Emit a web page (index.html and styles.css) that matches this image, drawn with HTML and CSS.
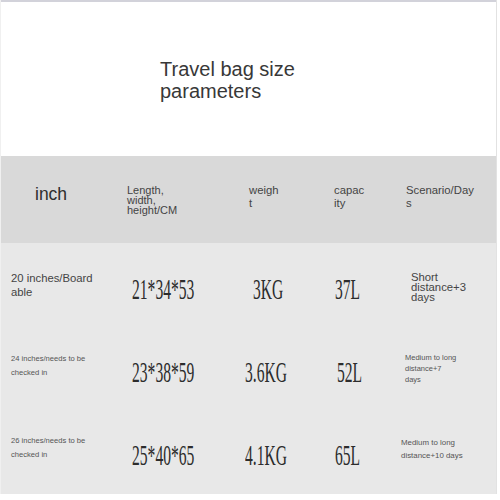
FILE: index.html
```html
<!DOCTYPE html>
<html>
<head>
<meta charset="utf-8">
<link rel="stylesheet" href="styles.css">
</head>
<body>
<div class="page">
  <div class="top">
    <h1 class="title">Travel bag size<br>parameters</h1>
  </div>
  <div class="head row">
    <div class="cell c1"><span class="inch">inch</span></div>
    <div class="cell c2"><span class="hsmall tight">Length,<br>width,<br>height/CM</span></div>
    <div class="cell c3"><span class="hsmall">weigh<br>t</span></div>
    <div class="cell c4"><span class="hsmall">capac<br>ity</span></div>
    <div class="cell c5"><span class="hsmall">Scenario/Day<br>s</span></div>
  </div>
  <div class="body">
    <div class="row r1">
      <div class="cell c1"><span class="lab big">20 inches/Board<br>able</span></div>
      <div class="cell c2"><span class="num">21*34*53</span></div>
      <div class="cell c3 p15"><span class="num">3KG</span></div>
      <div class="cell c4 p12"><span class="num">37L</span></div>
      <div class="cell c5 p16"><span class="scen big">Short<br>distance+3<br>days</span></div>
    </div>
    <div class="row r2">
      <div class="cell c1"><span class="lab small">24 inches/needs to be<br>checked in</span></div>
      <div class="cell c2"><span class="num">23*38*59</span></div>
      <div class="cell c3 p7"><span class="num">3.6KG</span></div>
      <div class="cell c4 p14"><span class="num">52L</span></div>
      <div class="cell c5 p10"><span class="scen mid">Medium to long<br>distance+7<br>days</span></div>
    </div>
    <div class="row r3">
      <div class="cell c1"><span class="lab small">26 inches/needs to be<br>checked in</span></div>
      <div class="cell c2"><span class="num">25*40*65</span></div>
      <div class="cell c3 p7"><span class="num">4.1KG</span></div>
      <div class="cell c4 p12"><span class="num">65L</span></div>
      <div class="cell c5 p6"><span class="scen low">Medium to long<br>distance+10 days</span></div>
    </div>
  </div>
</div>
</body>
</html>
```

FILE: styles.css
```css
html, body {
  margin: 0;
  padding: 0;
  background: #ffffff;
}
body {
  font-family: "Liberation Sans", Arial, sans-serif;
  color: #333333;
}
.page {
  width: 497px;
  border-right: 1px solid #e2e2e2;
  border-left: 1px solid #f0f0f0;
  box-sizing: border-box;
}
.top {
  height: 156px;
  box-sizing: border-box;
  border-top: 2px solid #d2d2da;
  padding: 56px 0 0 159px;
  background: #ffffff;
}
.title {
  margin: 0;
  font-weight: normal;
  font-size: 20px;
  line-height: 22px;
  color: #383838;
}
.row {
  display: grid;
  grid-template-columns: 119px 118px 85px 72px 102px;
  align-items: center;
}
.head {
  height: 87px;
  background: #d9d9d9;
}
.body {
  background: #e8e8e8;
  padding-top: 4px;
  height: 251px;
  box-sizing: border-box;
}
.body .row {
  height: 82px;
}
.cell {
  padding-left: 11px;
}
.head .c1 { padding-left: 34px; padding-bottom: 10px; }
.head .c2 { padding-left: 7px; }
.head .c3 { padding-left: 11px; padding-bottom: 6px; }
.head .c4 { padding-left: 11px; padding-bottom: 6px; }
.head .c5 { padding-left: 11px; padding-bottom: 6px; }
.inch {
  font-size: 17.5px;
  color: #2e2e2e;
}
.hsmall {
  display: block;
  font-size: 11.3px;
  line-height: 13px;
  color: #444444;
}
.hsmall.tight {
  font-size: 11px;
  line-height: 10px;
}
.body .c1 { padding-left: 10px; }
.body .c2 { padding-left: 12px; }
.p6 { padding-left: 6px; }
.p7 { padding-left: 7px; }
.p10 { padding-left: 10px; }
.p12 { padding-left: 12px; }
.p14 { padding-left: 14px; }
.p15 { padding-left: 15px; }
.p16 { padding-left: 16px; }
.lab {
  display: block;
  color: #444444;
}
.lab.big {
  font-size: 11.3px;
  line-height: 14px;
  margin-top: -6px;
}
.lab.small {
  font-size: 7.6px;
  line-height: 14px;
  margin-top: -8px;
  color: #555555;
}
.num {
  display: inline-block;
  font-family: "Liberation Serif", "Times New Roman", serif;
  font-size: 30px;
  line-height: 30px;
  transform: scaleX(0.52);
  transform-origin: left center;
  color: #2c2c2c;
  white-space: nowrap;
}
.r1 .num { margin-top: 2px; }
.r2 .num { margin-top: 4px; }
.r3 .num { margin-top: 6px; }
.scen {
  display: block;
  color: #444444;
}
.scen.big {
  font-size: 11.3px;
  line-height: 10px;
  margin-top: -2px;
}
.scen.mid {
  font-size: 7.5px;
  line-height: 11px;
  margin-top: -4px;
  color: #555555;
}
.scen.low {
  font-size: 7.9px;
  line-height: 13px;
  margin-top: -6px;
  color: #555555;
}
```
